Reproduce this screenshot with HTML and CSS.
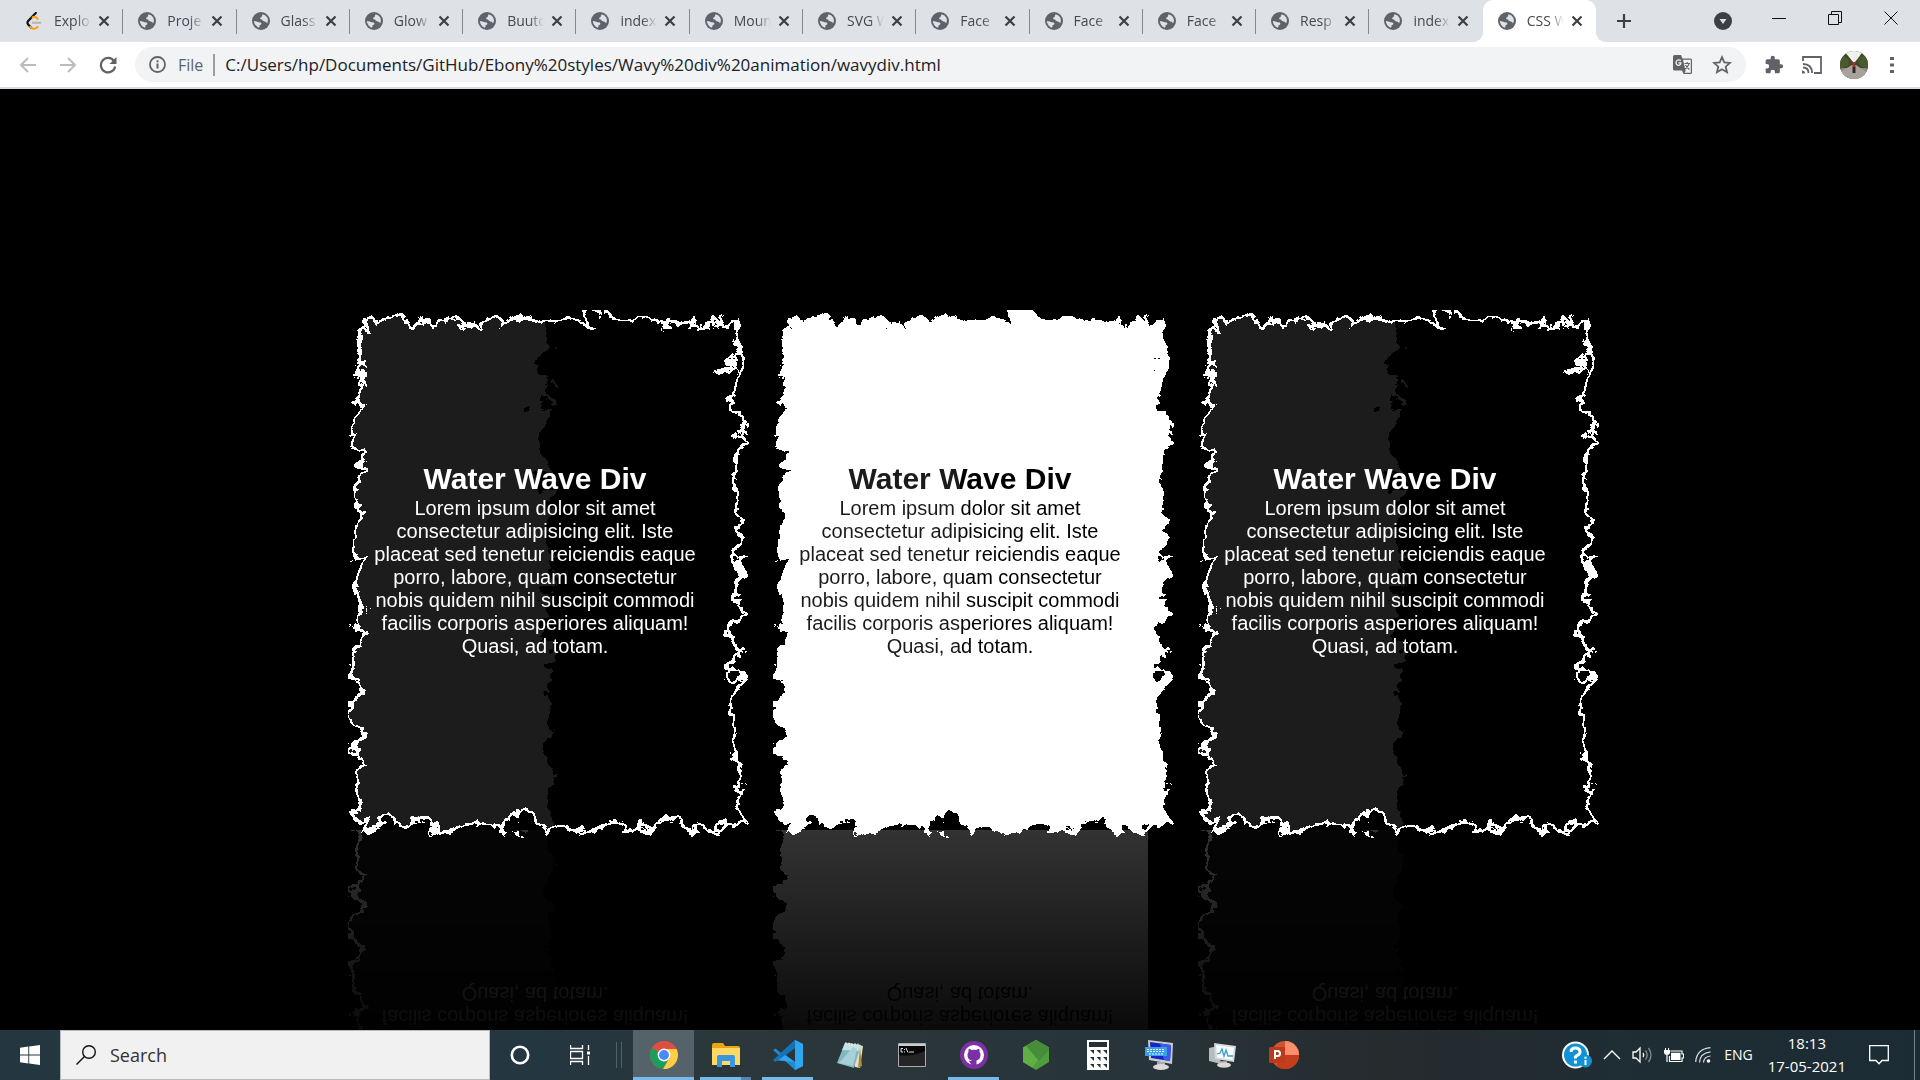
FILE: index.html
```html
<!DOCTYPE html>
<html lang="en">
<head>
<meta charset="utf-8">
<title>CSS Wavy Div</title>
<link rel="stylesheet" href="styles.css">
</head>
<body>
<svg class="defs" aria-hidden="true">
  <defs>
    <filter id="wavy">
      <feTurbulence x="0" y="0" baseFrequency="0.0263" numOctaves="5" seed="2"/>
      <feDisplacementMap in="SourceGraphic" scale="40"/>
    </filter>
    <symbol id="globe" viewBox="0 0 18 18"><circle cx="9" cy="9" r="9" fill="#5f6368"/><path d="M10.500 2.200Q14 3 15.500 6Q16.500 8.500 15 11.500Q14.500 9.500 12.500 9.500Q10.500 9 10 7.500Q8 7.500 8 6Q10 5.500 10.500 2.200ZM1.800 9Q5 9.200 6.500 10.200Q9 10 9.500 11.500Q9.200 13 7.500 13.200Q8 15 6.500 15.700Q2.300 13.500 1.800 9Z" fill="#dee1e6"/></symbol>
    <symbol id="close" viewBox="0 0 12 12"><path d="M1.500 1.500 10.500 10.500M10.500 1.500 1.500 10.500" stroke="#3c4043" stroke-width="2.200" fill="none"/></symbol>
  </defs>
</svg>

<header class="browser">
  <div class="tabstrip">
    <nav class="tabs" aria-label="Tabs">
      <div class="tab"><svg class="favicon" viewBox="0 0 18 20"><path d="M11 1 2.500 10Q1 12 2.500 14L6 17.500" fill="none" stroke="#111" stroke-width="2.400" stroke-linecap="round"/><path d="M5 16.500Q9 21 13 16.500M7.500 6Q10 4.500 13 7.500" fill="none" stroke="#ffa116" stroke-width="2.400" stroke-linecap="round"/><path d="M7.500 12H16" stroke="#b3b3b3" stroke-width="2.200" stroke-linecap="round"/></svg><a href="#" class="title">Explo</a><button class="close" aria-label="Close tab"><svg><use href="#close"/></svg></button></div>
      <div class="tab"><svg class="favicon"><use href="#globe"/></svg><a href="#" class="title">Proje</a><button class="close" aria-label="Close tab"><svg><use href="#close"/></svg></button></div>
      <div class="tab"><svg class="favicon"><use href="#globe"/></svg><a href="#" class="title">Glass</a><button class="close" aria-label="Close tab"><svg><use href="#close"/></svg></button></div>
      <div class="tab"><svg class="favicon"><use href="#globe"/></svg><a href="#" class="title">Glow</a><button class="close" aria-label="Close tab"><svg><use href="#close"/></svg></button></div>
      <div class="tab"><svg class="favicon"><use href="#globe"/></svg><a href="#" class="title">Buuto</a><button class="close" aria-label="Close tab"><svg><use href="#close"/></svg></button></div>
      <div class="tab"><svg class="favicon"><use href="#globe"/></svg><a href="#" class="title">index</a><button class="close" aria-label="Close tab"><svg><use href="#close"/></svg></button></div>
      <div class="tab"><svg class="favicon"><use href="#globe"/></svg><a href="#" class="title">Moun</a><button class="close" aria-label="Close tab"><svg><use href="#close"/></svg></button></div>
      <div class="tab"><svg class="favicon"><use href="#globe"/></svg><a href="#" class="title">SVG W</a><button class="close" aria-label="Close tab"><svg><use href="#close"/></svg></button></div>
      <div class="tab"><svg class="favicon"><use href="#globe"/></svg><a href="#" class="title">Face</a><button class="close" aria-label="Close tab"><svg><use href="#close"/></svg></button></div>
      <div class="tab"><svg class="favicon"><use href="#globe"/></svg><a href="#" class="title">Face</a><button class="close" aria-label="Close tab"><svg><use href="#close"/></svg></button></div>
      <div class="tab"><svg class="favicon"><use href="#globe"/></svg><a href="#" class="title">Face</a><button class="close" aria-label="Close tab"><svg><use href="#close"/></svg></button></div>
      <div class="tab"><svg class="favicon"><use href="#globe"/></svg><a href="#" class="title">Resp</a><button class="close" aria-label="Close tab"><svg><use href="#close"/></svg></button></div>
      <div class="tab last"><svg class="favicon"><use href="#globe"/></svg><a href="#" class="title">index</a><button class="close" aria-label="Close tab"><svg><use href="#close"/></svg></button></div>
      <div class="tab active"><svg class="favicon"><use href="#globe"/></svg><a href="#" class="title">CSS W</a><button class="close" aria-label="Close tab"><svg><use href="#close"/></svg></button></div>
    </nav>
    <button class="newtab" aria-label="New tab"><svg width="16" height="16" viewBox="0 0 16 16"><path d="M8 1V15M1 8H15" stroke="#3c4043" stroke-width="2.200"/></svg></button>
    <div class="window-buttons">
      <button aria-label="Search tabs"><svg width="18" height="18" viewBox="0 0 18 18"><circle cx="9" cy="9" r="9" fill="#3c4043"/><path d="M5.500 7H12.500L9 12Z" fill="#dee1e6"/></svg></button>
      <button aria-label="Minimize"><svg width="14" height="14" viewBox="0 0 14 14"><path d="M0 7.500H14" stroke="#111"/></svg></button>
      <button aria-label="Restore"><svg width="14" height="14" viewBox="0 0 14 14"><path d="M.5 3.500H10.500V13.500H.5ZM3.500 3.500V.5H13.500V11.500H10.500" fill="none" stroke="#111"/></svg></button>
      <button aria-label="Close window"><svg width="14" height="14" viewBox="0 0 14 14"><path d="M.5.5 13.500 13.500M13.500.5.5 13.500" stroke="#111"/></svg></button>
    </div>
  </div>
  <div class="toolbar">
    <div class="nav-buttons">
      <button aria-label="Back"><svg width="18" height="18" viewBox="0 0 18 18"><path d="M17 9H2M9 2 2 9 9 16" fill="none" stroke="#babcbe" stroke-width="2"/></svg></button>
      <button aria-label="Forward"><svg width="18" height="18" viewBox="0 0 18 18"><path d="M1 9H16M9 2 16 9 9 16" fill="none" stroke="#babcbe" stroke-width="2"/></svg></button>
      <button aria-label="Reload"><svg width="18" height="18" viewBox="0 0 18 18"><path d="M15 5A7.200 7.200 0 1 0 16.200 10.500" fill="none" stroke="#5f6368" stroke-width="2.200"/><path d="M17.500 1V8H10.500Z" fill="#5f6368"/></svg></button>
    </div>
    <div class="omnibox">
      <svg width="17" height="17" viewBox="0 0 17 17"><circle cx="8.500" cy="8.500" r="7.500" fill="none" stroke="#5f6368" stroke-width="1.800"/><path d="M8.500 7.500V12.500M8.500 4.300V6.200" stroke="#5f6368" stroke-width="2"/></svg>
      <label class="scheme" for="url">File</label>
      <input id="url" class="url" type="text" value="C:/Users/hp/Documents/GitHub/Ebony%20styles/Wavy%20div%20animation/wavydiv.html">
      <button aria-label="Translate"><svg width="19" height="19" viewBox="0 0 19 19"><path d="M1.500 0H8L9.500 3.500H17.500Q19 3.500 19 5V17.500Q19 19 17.500 19H10.500L9 15.500H1.500Q0 15.500 0 14V1.500Q0 0 1.500 0Z" fill="#5f6368"/><path d="M10 4.700H17.800V17.800H11.500L13 15.500H12.500Z" fill="#f1f3f4"/><path d="M7.800 5.800Q6.500 4.500 4.800 5Q3 5.500 3 7.800Q3.200 10.300 5.400 10.400Q7.800 10.200 7.800 7.800H5.400" fill="none" stroke="#f1f3f4" stroke-width="1.300"/><path d="M11.500 8.500H17M14.200 7V8.500M16 8.500Q15.500 11.500 12 14M12.500 10Q14 13 16.500 14.500" fill="none" stroke="#5f6368" stroke-width="1.200"/></svg></button>
      <button aria-label="Bookmark"><svg width="20" height="20" viewBox="0 0 20 20"><path d="M10 2.200 12.300 7.400 18 7.900 13.700 11.700 15 17.200 10 14.200 5 17.200 6.300 11.700 2 7.900 7.700 7.400Z" fill="none" stroke="#5f6368" stroke-width="1.800"/></svg></button>
    </div>
    <div class="actions">
      <button aria-label="Extensions"><svg width="20" height="20" viewBox="0 0 24 24"><path d="M20.500 11H19V7c0-1.100-.9-2-2-2h-4V3.500a2.500 2.500 0 0 0-5 0V5H4c-1.100 0-2 .9-2 2v3.800h1.500a2.700 2.700 0 0 1 0 5.400H2V20c0 1.100.9 2 2 2h3.800v-1.500a2.700 2.700 0 0 1 5.400 0V22H17c1.100 0 2-.9 2-2v-4h1.500a2.500 2.500 0 0 0 0-5z" fill="#5f6368"/></svg></button>
      <button aria-label="Cast"><svg width="20" height="18" viewBox="0 0 20 18"><path d="M1 5V1H19V17H12M1 8Q10 8 10 17M1 11.500Q6.500 11.500 6.500 17" fill="none" stroke="#5f6368" stroke-width="1.800"/><path d="M0 14.500Q3 14.500 3 17.500H0Z" fill="#5f6368"/></svg></button>
      <button aria-label="Profile"><svg width="28" height="28" viewBox="0 0 28 28"><defs><clipPath id="face"><circle cx="14" cy="14" r="14"/></clipPath></defs><g clip-path="url(#face)"><path d="M0 0H28V28H0Z" fill="#3c4a28"/><path d="M4 0H23L19 6 15 11H13L9 6Z" fill="#eef2f0"/><path d="M0 17H28V28H0Z" fill="#8f8a80"/><path d="M12 14H16L28 22V28H0V21Z" fill="#a9a29b"/><path d="M0 5Q6 4 9 10L8 15 0 18ZM28 6Q22 3 18 10L20 15 28 18Z" fill="#4b5a2e"/><path d="M12.500 11H15.500V16H12.500Z" fill="#a33127"/><path d="M12.500 16H15.500V22H12.500Z" fill="#2a2a33"/></g></svg></button>
      <button aria-label="Menu"><svg width="4" height="18" viewBox="0 0 4 18"><path d="M0 1H4V4H0ZM0 7.500H4V10.500H0ZM0 14H4V17H0Z" fill="#5f6368"/></svg></button>
    </div>
  </div>
</header>

<main class="stage">
  <article class="card">
    <div class="content"><h2>Water Wave Div</h2><p>Lorem ipsum dolor sit amet consectetur adipisicing elit. Iste placeat sed tenetur reiciendis eaque porro, labore, quam consectetur nobis quidem nihil suscipit commodi facilis corporis asperiores aliquam! Quasi, ad totam.</p></div>
  </article>
  <article class="card light">
    <div class="content"><h2>Water Wave Div</h2><p>Lorem ipsum dolor sit amet consectetur adipisicing elit. Iste placeat sed tenetur reiciendis eaque porro, labore, quam consectetur nobis quidem nihil suscipit commodi facilis corporis asperiores aliquam! Quasi, ad totam.</p></div>
  </article>
  <article class="card">
    <div class="content"><h2>Water Wave Div</h2><p>Lorem ipsum dolor sit amet consectetur adipisicing elit. Iste placeat sed tenetur reiciendis eaque porro, labore, quam consectetur nobis quidem nihil suscipit commodi facilis corporis asperiores aliquam! Quasi, ad totam.</p></div>
  </article>
</main>

<footer class="taskbar">
  <button class="start" aria-label="Start"><svg width="20" height="20" viewBox="0 0 20 20"><path d="M0 2.700 8.300 1.500V9.500H0ZM9.200 1.400 20 0V9.500H9.200ZM0 10.500H8.300V18.500L0 17.300ZM9.200 10.500H20V20L9.200 18.600Z" fill="#fff"/></svg></button>
  <label class="search"><svg width="20" height="20" viewBox="0 0 20 20"><circle cx="13" cy="7" r="6.300" fill="none" stroke="#111" stroke-width="1.400"/><path d="M8.500 11.500.5 19.500" stroke="#111" stroke-width="1.400"/></svg><input type="text" placeholder="Search" aria-label="Search"></label>
  <div class="shell-buttons">
    <button aria-label="Cortana"><svg width="20" height="20" viewBox="0 0 20 20"><circle cx="10" cy="10" r="8.200" fill="none" stroke="#fff" stroke-width="2.600"/></svg></button>
    <button aria-label="Task view"><svg width="20" height="20" viewBox="0 0 20 20"><path d="M.5 0V3.500H12.500V0M.5 6.500H12.500V13.500H.5ZM.5 20V16.500H12.500V20M18.500 0V5M18.500 11V20" fill="none" stroke="#fff" stroke-width="1.300"/><path d="M17 6.500H20V9.500H17Z" fill="#fff"/></svg></button>
  </div>
  <div class="apps">
    <button class="app current" aria-label="Chrome"><svg width="28" height="28" viewBox="0 0 28 28"><circle cx="14" cy="14" r="14" fill="#dd4f43"/><path d="M14 14 1.900 7A14 14 0 0 0 13 28L19.500 17Z" fill="#1a9e5c"/><path d="M14 8H26.600A14 14 0 0 1 13 28L19.500 17Z" fill="#ffce44"/><circle cx="14" cy="14" r="6.400" fill="#fff"/><circle cx="14" cy="14" r="5" fill="#4a8af5"/></svg></button>
    <button class="app open group" aria-label="File Explorer"><svg width="28" height="24" viewBox="0 0 28 24"><path d="M0 2Q0 0 2 0H11L13 3H26Q28 3 28 5V22H0Z" fill="#e8a60f"/><path d="M0 5H28V22H0Z" fill="#ffd966"/><path d="M5 24V14Q5 12 7 12H21Q23 12 23 14V24H18V18H10V24Z" fill="#3a96dd"/></svg></button>
    <button class="app open" aria-label="Visual Studio Code"><svg width="30" height="30" viewBox="0 0 30 30"><path d="M22 0 8 13 2.500 8.500 0 10 22 30 30 26V4Z" fill="#1f8ad2"/><path d="M0 20 2.500 21.500 22 7V0L30 4V26L22 30V22" fill="#2fa5ee"/><path d="M0 20 22 0V8L2.500 22Z" fill="#1173b8"/><path d="M22 8V22L12.500 15Z" fill="#28353a"/></svg></button>
    <button class="app" aria-label="Notepad"><svg width="28" height="28" viewBox="0 0 28 28"><path d="M12 2 27 5 24 27 19 26Z" fill="#e8e0c8"/><path d="M24 6 26 25 22 27Z" fill="#b18a42"/><path d="M9 2 25 4 18 27 1 22Z" fill="#7fb7c2"/><path d="M9 2 25 4 23 10 6 9Z" fill="#c6e1e4"/><path d="M5 20 17 6 21 8 17 25 2 22Z" fill="#a7d1d8"/><path d="M10 1V4M13 1.500V4.500M16 2V5M19 2V5M22 2.500V5.500" stroke="#eee"/></svg></button>
    <button class="app" aria-label="Command Prompt"><svg width="28" height="24" viewBox="0 0 28 24"><path d="M.5.5H27.500V23.500H.5Z" fill="#080808" stroke="#a9adaf"/><path d="M1 1H27V3H1Z" fill="#c9cdcf"/><path d="M1 12Q14 14 27 8V23H1Z" fill="#252525"/><path d="M5 5.500H3V9H5M6.500 6V7M6.500 8.500V9.500M8 5 10 9.500M11 9H16" fill="none" stroke="#ddd"/></svg></button>
    <button class="app open" aria-label="GitHub Desktop"><svg width="28" height="28" viewBox="0 0 28 28"><circle cx="14" cy="14" r="14" fill="#7d2fa5"/><circle cx="14" cy="14" r="10" fill="#fff"/><path d="M11.500 24V20Q8.500 20.500 7.500 17.800M11.500 24.500V19.500Q7.500 18.500 7.500 14Q7.500 12 8.500 11Q8.200 9 8.800 7.800Q10.500 8 12 9Q14 8.500 16 9Q17.500 8 19.200 7.800Q19.800 9 19.500 11Q20.500 12 20.500 14Q20.500 18.500 16.500 19.500V24.500Z" fill="#7d2fa5"/></svg></button>
    <button class="app" aria-label="Node.js"><svg width="26" height="30" viewBox="0 0 26 30"><path d="M13 0 26 7.500V22L13 30 0 22V7.500Z" fill="#4f9e3e"/><path d="M13 0 26 7.500 9 27.500 0 22V7.500Z" fill="#5fae46"/><path d="M13 0 26 7.500V10L16 21 3 5.800Z" fill="#468c3a"/></svg></button>
    <button class="app" aria-label="Calculator"><svg width="22" height="30" viewBox="0 0 22 30"><path d="M0 0H22V30H0Z" fill="#fff"/><path d="M2 2H20V7H2ZM3 10H7V14ZM9.500 10H13.500V14ZM16 10H20V14ZM3 17H7V21ZM9.500 17H13.500V21ZM16 17H20V21ZM3 24H7V28ZM9.500 24H13.500V28ZM16 24H20V28Z" fill="#243137"/></svg></button>
    <button class="app" aria-label="On-Screen Keyboard"><svg width="30" height="30" viewBox="0 0 30 30"><path d="M3 0 28 3 27 24 4 20Z" fill="#c8ccd0"/><path d="M5 2 26 5 25 21 6 18Z" fill="#1626c4"/><path d="M15 3.500 26 5 25 21 19 20Z" fill="#3d59ea"/><path d="M12 22H20V26H12Z" fill="#aaa"/><ellipse cx="16" cy="27" rx="8" ry="3" fill="#d9d9d9"/><path d="M0 7H22V16H0Z" fill="#3ba0e6"/><path d="M2 9.500H20M2 11.500H20M4 14H18" stroke="#e9f5ff" stroke-dasharray="2 1"/></svg></button>
    <button class="app" aria-label="Resource Monitor"><svg width="28" height="26" viewBox="0 0 28 26"><path d="M1 6 10 4 13 22 1 19Z" fill="#b9bcbe"/><path d="M6 1 28 4 26 20 7 17Z" fill="#d5d8da"/><path d="M8 3 26 5.500 24.500 18 9 15.500Z" fill="#f5fafc"/><path d="M9 12 12 11 14 7 16 14 18 8 20 14 25 14" fill="none" stroke="#3b9ccc" stroke-width="1.300"/><path d="M12 19H19V22H12Z" fill="#999"/><ellipse cx="16" cy="23" rx="7" ry="2.800" fill="#d9d9d9"/></svg></button>
    <button class="app" aria-label="PowerPoint"><svg width="30" height="28" viewBox="0 0 30 28"><circle cx="16" cy="14" r="14" fill="#d35230"/><path d="M16 0A14 14 0 0 1 30 14H16Z" fill="#ff8f6b"/><path d="M16 14H30A14 14 0 0 1 7 24.700Z" fill="#c43e1c"/><rect y="6" width="16" height="16" rx="1.500" fill="#b83b1d"/><path d="M6 18V10H8.500Q11 10 11 12.500T8.500 15H6" fill="none" stroke="#fff" stroke-width="2"/></svg></button>
  </div>
  <div class="tray">
    <button aria-label="Support"><svg width="30" height="28" viewBox="0 0 30 28"><circle cx="13.500" cy="14" r="13.500" fill="#fff"/><circle cx="13.500" cy="14" r="11.500" fill="#1192d4"/><path d="M9 11Q9 7 13.500 7T18 11Q18 13 15.500 14.200T13.500 17.500" fill="none" stroke="#fff" stroke-width="3"/><path d="M12 19.500H15V22.500H12Z" fill="#fff"/><circle cx="23.500" cy="20" r="6.500" fill="#1192d4"/><path d="M23.500 19V24M23.500 15.800V17.800" stroke="#fff" stroke-width="2"/></svg></button>
    <button aria-label="Hidden icons"><svg width="18" height="10" viewBox="0 0 18 10"><path d="M1 9 9 1 17 9" fill="none" stroke="#fff" stroke-width="1.400"/></svg></button>
    <button aria-label="Volume"><svg width="21" height="18" viewBox="0 0 21 18"><path d="M1 6H4L8 2V16L4 12H1Z" fill="none" stroke="#fff" stroke-width="1.300"/><path d="M11 7Q12.500 9 11 11" fill="none" stroke="#fff" stroke-width="1.300"/><path d="M13.500 4.500Q17 9 13.500 13.500M16.500 2Q21.500 9 16.500 16" fill="none" stroke="#85898c" stroke-width="1.300"/></svg></button>
    <button aria-label="Battery"><svg width="20" height="14" viewBox="0 0 20 14"><path d="M6.500 3H18V6H19.500V10H18V13.500H5.500V8" fill="none" stroke="#fff" stroke-width="1.200"/><path d="M7 4.800H16.500V12H7ZM0 2H6V5Q5.500 7 3 7Q.5 7 0 5ZM1 0H2V2H1ZM4 0H5V2H4ZM2.400 7H3.600V14H2.400Z" fill="#fff"/></svg></button>
    <button aria-label="Wi-Fi"><svg width="16" height="16" viewBox="0 0 16 16"><path d="M.7 15Q1.500 2 15.500.7M4.500 15.500Q5 6 15.500 4.800M8.500 15.500Q9 9.500 15.500 9" fill="none" stroke="#d9dcde" stroke-width="1.200"/><circle cx="13.500" cy="14" r="1.800" fill="#fff"/></svg></button>
    <button class="lang">ENG</button>
    <div class="clock"><time>18:13</time><time>17-05-2021</time></div>
    <button aria-label="Notifications"><svg width="20" height="20" viewBox="0 0 20 20"><path d="M.7.7H19.300V15.500H13L10 18.800 7 15.500H.7Z" fill="none" stroke="#fff" stroke-width="1.300"/></svg></button>
  </div>
</footer>
</body>
</html>
```
FILE: styles.css
```css
* { box-sizing: border-box; margin: 0; padding: 0; }
body {
  display: flex;
  flex-direction: column;
  height: 100vh;
  overflow: hidden;
  background: #000;
  font-family: "Open Sans", "Noto Sans", sans-serif;
}
button { border: 0; background: none; color: inherit; font: inherit; display: grid; place-items: center; flex: none; }
svg { display: block; flex: none; }
.defs { position: absolute; width: 0; height: 0; }

/* Browser frame */
.browser { flex: none; background: #fff; border-bottom: 2px solid #d9d9e2; }
.tabstrip { display: flex; align-items: stretch; height: 42px; padding-left: 13px; background: #dee1e6; }
.tabs { display: flex; flex: 0 1 1583px; min-width: 0; }
.tab { position: relative; display: flex; align-items: center; flex: 1 1 0; min-width: 0; padding-left: 15px; }
.tab:first-child { padding-left: 12px; }
.tab::after { content: ""; position: absolute; right: 0; top: 9px; width: 1px; height: 25px; background: #85888d; }
.tab.last::after { display: none; }
.favicon { width: 18px; height: 18px; margin-right: 11px; }
.title {
  width: 37px;
  margin-right: 7px;
  overflow: hidden;
  white-space: nowrap;
  color: #45494d;
  font-size: 14px;
  line-height: 20px;
  text-decoration: none;
  mask-image: linear-gradient(90deg, #000 60%, transparent);
}
.close, .close svg { width: 12px; height: 12px; }
.tab.active { background: #fff; border-radius: 10px 10px 0 0; }
.tab.active::before, .tab.active::after {
  content: "";
  position: absolute;
  top: auto;
  bottom: 0;
  width: 10px;
  height: 10px;
}
.tab.active::before { left: -10px; background: radial-gradient(circle at 0 0, transparent 10px, #fff 10px); }
.tab.active::after { right: -10px; background: radial-gradient(circle at 100% 0, transparent 10px, #fff 10px); }
.newtab { width: 56px; }
.window-buttons { display: flex; margin-left: auto; padding-right: 1px; }
.window-buttons button { width: 56px; padding-bottom: 6px; }
.window-buttons button:first-child { padding-bottom: 0; }

.toolbar { display: flex; align-items: center; height: 45px; padding: 0 26px 0 19px; }
.nav-buttons { display: flex; gap: 22px; }
.omnibox {
  display: flex;
  align-items: center;
  flex: 1;
  height: 35px;
  margin: 0 18px;
  padding: 0 14px;
  border-radius: 18px;
  background: #f1f3f4;
}
.omnibox button + button { margin-left: 20px; }
.scheme { margin: 0 10px 0 12px; color: #5f6368; font-size: 16px; line-height: 22px; }
.url {
  flex: 1;
  min-width: 0;
  border: 0;
  border-left: 2px solid #9a9da1;
  padding-left: 10px;
  background: none;
  color: #202124;
  font: 17px/22px "Open Sans", "Noto Sans", sans-serif;
}
.actions { display: flex; align-items: center; gap: 18px; }
.actions button:last-child { margin-left: 4px; }

/* Cards */
.stage { display: flex; flex: 1; min-height: 0; align-items: center; justify-content: center; gap: 50px; overflow: hidden; }
.card {
  position: relative;
  display: flex;
  align-items: center;
  flex: none;
  width: 375px;
  height: 500px;
  padding: 25px;
  color: #fff;
  font-family: "Liberation Sans", Arial, sans-serif;
  text-align: center;
  -webkit-box-reflect: below 20px linear-gradient(transparent, transparent, #0003);
}
.card::before {
  content: "";
  position: absolute;
  top: 0;
  left: 0;
  box-sizing: content-box;
  width: 100%;
  height: 100%;
  border: 5px solid #fff;
  background: linear-gradient(90deg, #1b1b1b 50%, #000 50%);
  filter: url(#wavy);
}
.content { position: relative; width: 100%; }
.content h2 { font-size: 30px; line-height: 36px; }
.content p { font-size: 20px; line-height: 23px; }
.light::before { background: #fff; }
.light .content {
  background: linear-gradient(90deg, #1b1b1b 50%, #000 50%);
  background-clip: text;
  color: transparent;
}

/* Taskbar */
.taskbar {
  display: flex;
  align-items: stretch;
  flex: none;
  height: 50px;
  background: linear-gradient(90deg, #243740, #243640 28%, #2b373a 38%, #27343a 60%, #262b2e 72%, #1f2d34 84%, #1c2c34);
  color: #fff;
}
.start { width: 60px; }
.search { display: flex; align-items: center; gap: 14px; width: 430px; padding-left: 15px; border: 1px solid #b9bcbe; background: #f1f1f1; }
.search input { flex: 1; min-width: 0; border: 0; background: none; font: 18px/24px "Open Sans", "Noto Sans", sans-serif; }
.search input::placeholder { color: #333; opacity: 1; }
.shell-buttons { display: flex; padding-right: 11px; }
.shell-buttons button { width: 60px; }
.shell-buttons::after { content: ""; align-self: center; width: 4px; height: 26px; margin-left: 6px; border: 1px solid #53606a; border-width: 0 1px; }
.apps { display: flex; gap: 1px; }
.app { position: relative; width: 61px; }
.current { background: #56626a; }
.app.open::after, .current::after { content: ""; position: absolute; right: 5px; bottom: 0; left: 5px; height: 3px; background: #76b9ed; }
.current::after { right: 0; left: 0; }
.app.group::after { background: linear-gradient(90deg, #76b9ed 80%, #5586b0 80%); }
.tray { display: flex; align-items: center; margin-left: auto; padding-right: 25px; border-right: 1px solid #74808a; margin-right: 5px; font-size: 15px; }
.tray > * + * { margin-left: 11px; }
.tray .lang { margin-left: 13px; font-size: 14px; line-height: 20px; }
.tray .clock { display: flex; flex-direction: column; align-items: center; margin-left: 15px; line-height: 23px; }
.tray .clock + button { margin-left: 23px; }
```
